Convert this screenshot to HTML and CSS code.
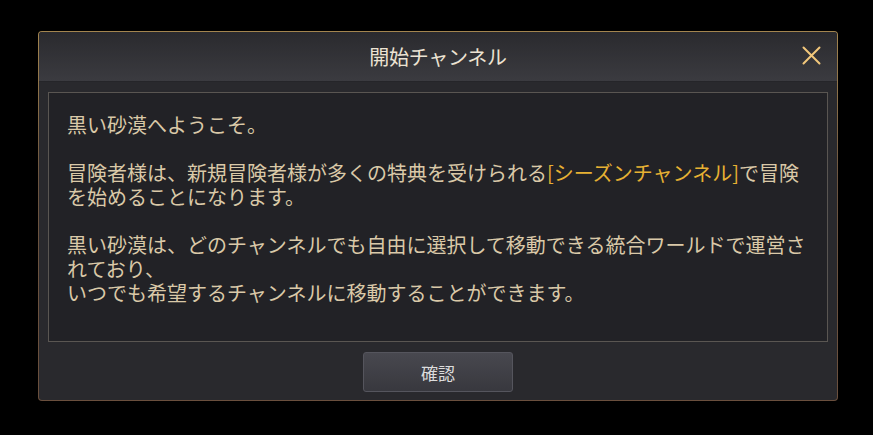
FILE: index.html
```html
<!DOCTYPE html>
<html lang="ja">
    <head>
        <meta charset="utf-8">
        <link rel="stylesheet" href="styles.css">
    </head>

    <body>
        <div class="frame">
            <div class="dialog">
                <div class="header">
                    <div class="title">開始チャンネル</div>

                    <button class="close" aria-label="閉じる">
                        <svg width="19" height="19" viewBox="0 0 19 19">
                            <path d="M1.5 1.5 L17.5 17.5 M17.5 1.5 L1.5 17.5" stroke="#f2c77b" stroke-width="2" stroke-linecap="round" fill="none"/>
                        </svg>
                    </button>
                </div>

                <div class="body">
                    <div class="message">
                        黒い砂漠へようこそ。<br>
                        <br>
                        冒険者様は、新規冒険者様が多くの特典を受けられる<span class="accent">[シーズンチャンネル]</span>で冒険を始めることになります。<br>
                        <br>
                        黒い砂漠は、どのチャンネルでも自由に選択して移動できる統合ワールドで運営されており、<br>
                        いつでも希望するチャンネルに移動することができます。
                    </div>

                    <div class="actions">
                        <button class="btn">確認</button>
                    </div>
                </div>
            </div>
        </div>
    </body>
</html>
```

FILE: styles.css
```css
body
{
    margin: 0;
    background: #000000;
    font-family: "Noto Sans CJK JP", "Noto Sans", sans-serif;
}

.frame
{
    width: 798px;
    margin-top: 31px;
    margin-left: 38px;
    padding: 1px;
    border-radius: 4px;
    background: linear-gradient(#a3854f, #6b5440 40%, #6a4f3d);
}

.dialog
{
    border-radius: 3px;
    background: #29292d;
    overflow: hidden;
}

.header
{
    position: relative;
    height: 49px;
    display: flex;
    align-items: center;
    justify-content: center;
    background: linear-gradient(#2a2a2e, #3b3b40);
    border-bottom: 1px solid #252529;
}

.title
{
    color: #ece3d3;
    font-size: 20px;
    letter-spacing: -0.3px;
}

.close
{
    position: absolute;
    right: 16px;
    top: 14px;
    padding: 0;
    border: none;
    background: none;
    cursor: pointer;
    line-height: 0;
}

.body
{
    padding: 10px 9px 8px 9px;
}

.message
{
    height: 208px;
    padding: 20px 14px 20px 18px;
    border: 1px solid #5a5652;
    background: #222226;
    color: #dac9a8;
    font-size: 20px;
    line-height: 24px;
}

.accent
{
    color: #e7b133;
}

.actions
{
    display: flex;
    justify-content: center;
    padding-top: 10px;
}

.btn
{
    width: 150px;
    height: 40px;
    border: 1px solid #55555d;
    border-radius: 3px;
    background: linear-gradient(#48484f, #38383e);
    color: #dcdcdc;
    font-family: "Noto Sans CJK JP", sans-serif;
    font-size: 17px;
    cursor: pointer;
}

.btn:hover
{
    background: linear-gradient(#525259, #404046);
}
```
